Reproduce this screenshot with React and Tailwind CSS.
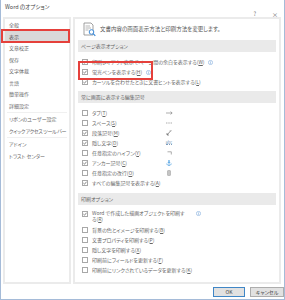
import React from "react";

const FONT = "[font-family:'Noto_Sans_CJK_JP','Noto_Sans',sans-serif] [font-feature-settings:'palt']";

function Check({ checked }) {
  return (
    <span className="w-[6px] h-[6px] border border-[#a8a8a8] bg-white flex items-center justify-center shrink-0">
      {checked && (
        <svg width="4" height="4" viewBox="0 0 4 4">
          <path d="M0.4 2.1 L1.5 3.2 L3.6 0.7" fill="none" stroke="#555" strokeWidth="0.7" />
        </svg>
      )}
    </span>
  );
}

function Info() {
  return (
    <svg width="5" height="5" viewBox="0 0 10 10" className="shrink-0">
      <circle cx="5" cy="5" r="4.2" fill="none" stroke="#7aa8da" strokeWidth="1.2" />
      <rect x="4.4" y="4.2" width="1.2" height="3.4" fill="#7aa8da" />
      <rect x="4.4" y="2.4" width="1.2" height="1.2" fill="#7aa8da" />
    </svg>
  );
}

function SectionBar({ children }) {
  return (
    <div className="mx-[3px] h-[12px] bg-[#eaeaea] flex items-center pl-[3px] text-[5px] text-[#666]">
      {children}
    </div>
  );
}

function Row({ checked, children, extra }) {
  return (
    <div className="h-[10px] flex items-center pl-[7px] gap-[4px]">
      <Check checked={checked} />
      <span className="text-[5px] text-[#666] whitespace-nowrap">{children}</span>
      {extra}
    </div>
  );
}

function SymRow({ checked, label, sym }) {
  return (
    <div className="h-[10px] flex items-center pl-[7px] gap-[4px]">
      <Check checked={checked} />
      <span className="w-[69px] text-[5px] text-[#666] whitespace-nowrap">{label}</span>
      <span className="w-[8px] flex items-center justify-center">{sym}</span>
    </div>
  );
}

const symTab = (
  <svg width="7" height="4" viewBox="0 0 7 4">
    <path d="M0 2 H6 M4.5 0.6 L6.2 2 L4.5 3.4" fill="none" stroke="#777" strokeWidth="0.6" />
  </svg>
);
const symSpace = (
  <svg width="6" height="2" viewBox="0 0 6 2">
    <rect x="0.3" y="0.5" width="1" height="1" fill="#888" />
    <rect x="2.5" y="0.5" width="1" height="1" fill="#888" />
    <rect x="4.7" y="0.5" width="1" height="1" fill="#888" />
  </svg>
);
const symPara = (
  <svg width="6" height="6" viewBox="0 0 6 6">
    <path d="M5 0.5 L1 5 M1 3 V5 H3" fill="none" stroke="#666" strokeWidth="0.7" />
    <path d="M3.5 0.8 h2" stroke="#999" strokeWidth="0.5" />
  </svg>
);
const symHidden = (
  <span className="text-[4px] leading-[4px] text-[#7d9cbc] border-b border-dotted border-[#7d9cbc]">abc</span>
);
const symHyphen = (
  <svg width="5" height="4" viewBox="0 0 5 4">
    <path d="M0.5 0.8 H4.3 V3.5" fill="none" stroke="#777" strokeWidth="0.6" />
  </svg>
);
const symAnchor = (
  <svg width="6" height="6" viewBox="0 0 12 12">
    <circle cx="6" cy="2" r="1.3" fill="none" stroke="#3a96de" strokeWidth="1.2" />
    <path d="M6 3.3 V11 M3.5 5 H8.5 M1.5 7 C2 10 4 11 6 11 C8 11 10 10 10.5 7" fill="none" stroke="#3a96de" strokeWidth="1.3" />
  </svg>
);
const symBreak = (
  <svg width="4" height="6" viewBox="0 0 4 6">
    <rect x="0.5" y="0.5" width="3" height="5" rx="0.6" fill="#c4c4c4" stroke="#999" strokeWidth="0.5" />
  </svg>
);

const navTop = ["全般", "表示", "文章校正", "保存", "文字体裁", "言語", "簡単操作", "詳細設定"];

function NavItem({ label, selected, tight }) {
  if (selected) {
    return (
      <div className="relative h-[11.5px] flex items-center pl-[4px] bg-[#d9d9d9] text-[5px] text-[#555]">
        <span className="absolute left-[-4px] right-[-1px] top-[-1.5px] bottom-[-0.5px] border-2 border-[#e5403b]" />
        {label}
      </div>
    );
  }
  return (
    <div className={`h-[11.5px] flex items-center pl-[4px] text-[5px] text-[#666] whitespace-nowrap ${tight ? "tracking-[-0.35px]" : ""}`}>
      {label}
    </div>
  );
}

export default function App() {
  return (
    <div className={`w-[285px] h-[300px] bg-white border-x border-b border-[#a5bbd8] flex flex-col ${FONT}`}>
      {/* title */}
      <div className="h-[17px] flex items-start">
        <span className="pl-[4px] pt-[3px] text-[5.5px] text-[#444]">Word のオプション</span>
        <span className="ml-auto pt-[10px] text-[5.5px] text-[#666]">?</span>
        <span className="ml-[16px] mr-[6px] pt-[10px] text-[6px] text-[#666]">×</span>
      </div>

      {/* main */}
      <div className="h-[267px] flex pl-[2px] gap-[2px]">
        {/* left nav */}
        <div className="w-[68px] border-2 border-[#ebebeb] flex flex-col">
          {navTop.map((n, i) => (
            <NavItem key={n} label={n} selected={i === 1} />
          ))}
          <div className="h-[2px] flex items-center mx-[2px]"><div className="h-px w-full bg-[#f0f0f0]" /></div>
          <NavItem label="リボンのユーザー設定" />
          <NavItem label="クイック アクセス ツール バー" tight />
          <div className="h-[2px] flex items-center mx-[2px]"><div className="h-px w-full bg-[#f0f0f0]" /></div>
          <NavItem label="アドイン" />
          <NavItem label="トラスト センター" />
        </div>

        {/* right panel */}
        <div className="w-[208px] border-2 border-[#ebebeb] flex flex-col">
          <div className="h-[20px] flex items-center pl-[8px] gap-[4px]">
            <svg width="13" height="15" viewBox="0 0 13 15">
              <path d="M1 1 H8 L10 3 V13 H1 Z" fill="#fff" stroke="#888" strokeWidth="0.8" />
              <path d="M2.5 4 H7 M2.5 6 H8 M2.5 8 H5.5" stroke="#999" strokeWidth="0.7" />
              <circle cx="8.5" cy="10" r="2.3" fill="#fff" stroke="#3b8ad8" strokeWidth="1" />
              <path d="M10.2 11.7 L12.3 13.8" stroke="#3b8ad8" strokeWidth="1.2" />
            </svg>
            <span className="text-[5.5px] text-[#555] whitespace-nowrap">文書内容の画面表示方法と印刷方法を変更します。</span>
          </div>

          <div className="mt-[1px]">
            <SectionBar>ページ表示オプション</SectionBar>
          </div>
          <div className="relative mt-[5px]">
            <Row checked extra={<Info />}>印刷レイアウト表示でページ間の余白を表示する(<u>W</u>)</Row>
            <Row checked extra={<Info />}>蛍光ペンを表示する(<u>H</u>)</Row>
            <Row checked>カーソルを合わせたときに文書ヒントを表示する(<u>L</u>)</Row>
            <span className="absolute left-[3px] top-[4px] w-[75px] h-[19px] border-[2.5px] border-[#e5403b]" />
          </div>

          <div className="mt-[3.5px]">
            <SectionBar>常に画面に表示する編集記号</SectionBar>
          </div>
          <div className="mt-[5px]">
            <SymRow label={<>タブ(<u>T</u>)</>} sym={symTab} />
            <SymRow label={<>スペース(<u>S</u>)</>} sym={symSpace} />
            <SymRow checked label={<>段落記号(<u>M</u>)</>} sym={symPara} />
            <SymRow checked label={<>隠し文字(<u>D</u>)</>} sym={symHidden} />
            <SymRow label={<>任意指定のハイフン(<u>Y</u>)</>} sym={symHyphen} />
            <SymRow checked label={<>アンカー記号(<u>C</u>)</>} sym={symAnchor} />
            <SymRow label={<>任意指定の改行(<u>O</u>)</>} sym={symBreak} />
            <Row checked>すべての編集記号を表示する(<u>A</u>)</Row>
          </div>

          <div className="mt-[5px]">
            <SectionBar>印刷オプション</SectionBar>
          </div>
          <div className="mt-[3px] flex items-start pl-[7px] gap-[4px] pt-[3px] pb-[3px]">
            <Check checked />
            <span className="w-[100px] text-[5px] leading-[6px] text-[#666] -mt-[0.5px]">
              Word で作成した描画オブジェクトを印刷す<br />る(<u>R</u>)
            </span>
            <Info />
          </div>
          <Row>背景の色とイメージを印刷する(<u>B</u>)</Row>
          <Row>文書プロパティを印刷する(<u>P</u>)</Row>
          <Row>隠し文字を印刷する(<u>X</u>)</Row>
          <Row>印刷前にフィールドを更新する(<u>F</u>)</Row>
          <Row>印刷前にリンクされているデータを更新する(<u>K</u>)</Row>
        </div>
      </div>

      {/* buttons */}
      <div className="flex-1 flex justify-end items-start pt-[3px] gap-[5px] pr-[0px]">
        <div className="w-[32px] h-[10px] border border-[#3f86c6] bg-[#e1e1e1] flex items-center justify-center text-[5px] text-[#444]">OK</div>
        <div className="w-[34px] h-[10px] border border-[#adadad] bg-[#e1e1e1] flex items-center justify-center text-[5px] text-[#444]">キャンセル</div>
      </div>
    </div>
  );
}
